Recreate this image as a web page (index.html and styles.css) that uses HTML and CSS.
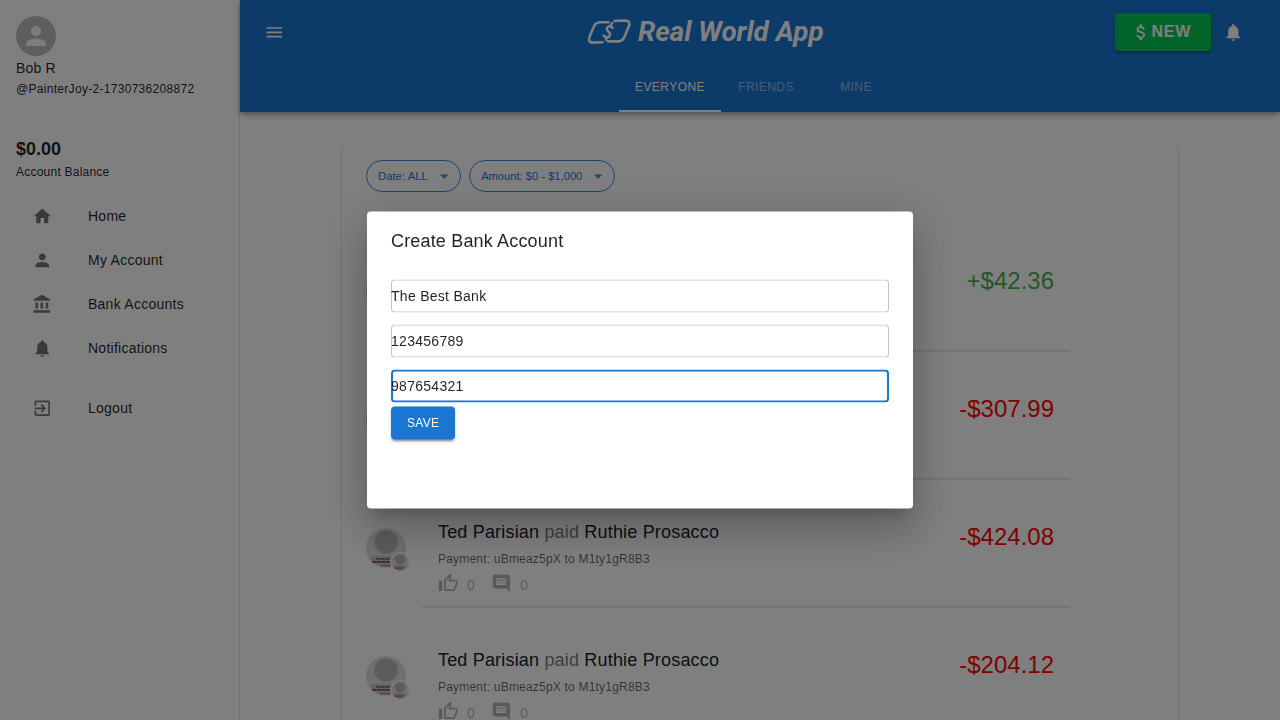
FILE: index.html
```html
<!DOCTYPE html>
<html lang="en">
<head>
<meta charset="utf-8">
<title>Real World App</title>
<link rel="stylesheet" href="styles.css">
</head>
<body>
<svg width="0" height="0" class="defs">
  <symbol id="person" viewBox="0 0 24 24"><path d="M12 12c2.21 0 4-1.79 4-4s-1.79-4-4-4-4 1.79-4 4 1.79 4 4 4zm0 2c-2.67 0-8 1.34-8 4v2h16v-2c0-2.66-5.33-4-8-4z"/></symbol>
  <symbol id="bell" viewBox="0 0 24 24"><path d="M12 22c1.1 0 2-.9 2-2h-4c0 1.1.89 2 2 2zm6-6v-5c0-3.07-1.64-5.64-4.5-6.32V4c0-.83-.67-1.5-1.5-1.5s-1.5.67-1.5 1.5v.68C7.63 5.36 6 7.92 6 11v5l-2 2v1h16v-1l-2-2z"/></symbol>
  <symbol id="drop" viewBox="0 0 24 24"><path d="M7 10l5 5 5-5z"/></symbol>
  <symbol id="thumb" viewBox="0 0 24 24"><path d="M9 21h9c.83 0 1.54-.5 1.84-1.22l3.02-7.05c.09-.23.14-.47.14-.73v-2c0-1.1-.9-2-2-2h-6.31l.95-4.57.03-.32c0-.41-.17-.79-.44-1.06L14.17 1 7.58 7.59C7.22 7.95 7 8.45 7 9v10c0 1.1.9 2 2 2zM9 9l4.34-4.34L12 10h9v2l-3 7H9V9zM1 9h4v12H1z"/></symbol>
  <symbol id="comment" viewBox="0 0 24 24"><path d="M21.99 4c0-1.1-.89-2-1.99-2H4c-1.1 0-2 .9-2 2v12c0 1.1.9 2 2 2h14l4 4-.01-18zM18 14H6v-2h12v2zm0-3H6V9h12v2zm0-3H6V6h12v2z"/></symbol>
  <symbol id="face" viewBox="0 0 40 40"><circle cx="20" cy="20" r="20" fill="#dedede"/><path d="M3.800 31 Q4.500 28 9 28H31Q35.500 28 36.200 31A20 20 0 0 1 3.800 31Z" fill="#c4c4c4"/><circle cx="20" cy="14" r="11.700" fill="#b9b9b9"/><path d="M10 30.800h18M6 34h22" stroke="#b8262b" stroke-width="1.300" stroke-dasharray="4.200 .5"/><path d="M14 37.500h12" stroke="#8a8a8a"/></symbol>
</svg>
<div class="app">
  <aside class="sidebar">
    <div class="avatar"><svg class="avatar-icon"><use href="#person"/></svg></div>
    <div class="name">Bob R</div>
    <div class="handle">@PainterJoy-2-1730736208872</div>
    <div class="balance">$0.00</div>
    <div class="balance-label">Account Balance</div>
    <nav class="nav">
      <a class="nav-item"><svg class="icon" viewBox="0 0 24 24"><path d="M10 20v-6h4v6h5v-8h3L12 3 2 12h3v8z"/></svg>Home</a>
      <a class="nav-item"><svg class="icon"><use href="#person"/></svg>My Account</a>
      <a class="nav-item"><svg class="icon" viewBox="0 0 24 24"><path d="M4 10v7h3v-7H4zm6 0v7h3v-7h-3zM2 22h19v-3H2v3zm14-12v7h3v-7h-3zm-4.500-9L2 6v2h19V6l-9.500-5z"/></svg>Bank Accounts</a>
      <a class="nav-item"><svg class="icon"><use href="#bell"/></svg>Notifications</a>
      <a class="nav-item logout"><svg class="icon" viewBox="0 0 24 24"><path d="M10.090 15.590L11.500 17l5-5-5-5-1.410 1.410L12.670 11H3v2h9.670l-2.580 2.590zM19 3H5c-1.110 0-2 .9-2 2v4h2V5h14v14H5v-4H3v4c0 1.100.89 2 2 2h14c1.100 0 2-.9 2-2V5c0-1.100-.9-2-2-2z"/></svg>Logout</a>
    </nav>
  </aside>
  <div class="main">
    <header class="appbar">
      <div class="toolbar">
        <svg class="icon" viewBox="0 0 24 24"><path d="M3 18h18v-2H3v2zm0-5h18v-2H3v2zm0-7v2h18V6H3z"/></svg>
        <div class="logo">
          <svg class="logo-mark" viewBox="0 0 44 26" fill="none" stroke="#fff" stroke-width="2.600" stroke-linecap="round" stroke-linejoin="round"><path d="M21.500 3.200H13.500Q9 3.200 7.200 7L2.600 17.500Q.8 23.600 5.500 23.600L15.500 23.200M27.500 2L38 1.500Q43.500 1.500 42 7L38 16.500Q36 22.400 31.500 22.400H21"/><path stroke-width="2.500" d="M25.500 8.800Q24.300 6.600 21.800 7.400Q18.600 9 20.500 11.600L22.600 13.800Q24 16.800 21.200 18Q18.200 19 16.600 16.500M23.500 6.500L25.300 4M19.600 18.800L19 20.800"/></svg>
          <span class="logo-text">Real World App</span>
        </div>
        <div class="actions">
          <div class="new"><svg class="new-icon" viewBox="0 0 24 24"><path d="M11.800 10.900c-2.270-.59-3-1.200-3-2.150 0-1.090 1.010-1.850 2.700-1.850 1.780 0 2.440.85 2.500 2.100h2.210c-.07-1.720-1.120-3.300-3.210-3.810V3h-3v2.160c-1.940.42-3.500 1.680-3.500 3.610 0 2.310 1.910 3.460 4.700 4.130 2.500.6 3 1.480 3 2.410 0 .69-.49 1.790-2.700 1.790-2.060 0-2.870-.92-2.980-2.100h-2.200c.12 2.190 1.760 3.420 3.680 3.830V21h3v-2.150c1.950-.37 3.500-1.500 3.500-3.550 0-2.840-2.430-3.810-4.700-4.400z"/></svg>NEW</div>
          <svg class="icon"><use href="#bell"/></svg>
        </div>
      </div>
      <div class="tabs"><div class="tab active">EVERYONE</div><div class="tab">FRIENDS</div><div class="tab">MINE</div></div>
    </header>
    <section class="paper">
      <div class="filters">
        <div class="chip">Date: ALL<svg class="icon"><use href="#drop"/></svg></div>
        <div class="chip amount-chip">Amount: $0 - $1,000<svg class="icon"><use href="#drop"/></svg></div>
      </div>
      <div class="list">
        <article class="row"><div class="faces"><svg class="face"><use href="#face"/></svg></div><div class="row-body"><div class="amount plus">+$42.36</div></div></article>
        <article class="row"><div class="faces"><svg class="face"><use href="#face"/></svg></div><div class="row-body"><div class="amount">-$307.99</div></div></article>
        <article class="row">
          <div class="faces"><svg class="face"><use href="#face"/></svg><svg class="badge"><use href="#face"/></svg></div>
          <div class="row-body">
            <div class="details"><div class="title">Ted Parisian <span>paid</span> Ruthie Prosacco</div><div class="note">Payment: uBmeaz5pX to M1ty1gR8B3</div><div class="stats"><svg class="icon"><use href="#thumb"/></svg><span>0</span><svg class="icon"><use href="#comment"/></svg><span>0</span></div></div>
            <div class="amount">-$424.08</div>
          </div>
        </article>
        <article class="row">
          <div class="faces"><svg class="face"><use href="#face"/></svg><svg class="badge"><use href="#face"/></svg></div>
          <div class="row-body">
            <div class="details"><div class="title">Ted Parisian <span>paid</span> Ruthie Prosacco</div><div class="note">Payment: uBmeaz5pX to M1ty1gR8B3</div><div class="stats"><svg class="icon"><use href="#thumb"/></svg><span>0</span><svg class="icon"><use href="#comment"/></svg><span>0</span></div></div>
            <div class="amount">-$204.12</div>
          </div>
        </article>
      </div>
    </section>
  </div>
</div>
<div class="backdrop">
  <div class="dialog" role="dialog">
    <h2 class="dialog-title">Create Bank Account</h2>
    <form class="form">
      <div class="field">The Best Bank</div>
      <div class="field">123456789</div>
      <div class="field focused">987654321</div>
      <div class="save">SAVE</div>
    </form>
  </div>
</div>
</body>
</html>
```
FILE: styles.css
```css
* { box-sizing: border-box; }
body { margin: 0; font-family: "Liberation Sans", Arial, sans-serif; font-size: 12px; color: rgba(0,0,0,.87); background: #fff; height: 720px; overflow: hidden; }
.defs { position: absolute; }
.icon { width: 20.57px; height: 20.57px; fill: currentColor; flex: none; }
.app { display: flex; height: 720px; overflow: hidden; }

.sidebar { width: 240px; flex: none; border-right: 1px solid rgba(0,0,0,.12); padding: 16px 0 0 16px; }
.avatar { width: 40px; height: 40px; border-radius: 50%; background: #bdbdbd; display: flex; align-items: center; justify-content: center; }
.avatar-icon { width: 30px; height: 30px; fill: #fafafa; }
.name { font-size: 14px; line-height: 24px; letter-spacing: .2px; }
.handle { line-height: 18px; letter-spacing: .3px; }
.balance { font-size: 18px; font-weight: 700; line-height: 28px; margin-top: 37px; }
.balance-label { line-height: 19px; letter-spacing: .23px; }
.nav { margin-top: 12.400px; }
.nav-item { display: flex; align-items: center; height: 44px; padding-left: 16.400px; gap: 35.030px; font-size: 14px; letter-spacing: .26px; }
.nav-item .icon { fill: rgba(0,0,0,.54); }
.logout { margin-top: 16px; }

.main { flex: 1; min-width: 0; background: #fff; }
.appbar { height: 112px; background: #1976d2; color: #fff; box-shadow: 0 2px 4px -1px rgba(0,0,0,.2), 0 4px 5px rgba(0,0,0,.14), 0 1px 10px rgba(0,0,0,.12); }
.toolbar { height: 64px; display: grid; grid-template-columns: 322.800px 1fr auto; align-items: center; padding: 0 36px 0 24px; }
.logo { display: flex; align-items: center; gap: 7.200px; margin-top: -1px; }
.logo-mark { width: 44px; height: 26px; }
.logo-text { font: italic 700 27.800px/36px Roboto, sans-serif; white-space: nowrap; }
.actions { display: flex; align-items: center; gap: 12px; }
.new { width: 96px; height: 38px; border-radius: 4px; background: #00c853; display: flex; align-items: center; justify-content: center; padding-right: 5px; font-size: 16px; font-weight: 700; letter-spacing: .7px; box-shadow: 0 3px 1px -2px rgba(0,0,0,.2), 0 2px 2px rgba(0,0,0,.14), 0 1px 5px rgba(0,0,0,.12); }
.new-icon { width: 20.57px; height: 20.57px; fill: #fff; }
.tabs { display: flex; justify-content: center; height: 48px; }
.tab { min-width: 90px; padding: 0 16px; line-height: 47px; text-align: center; letter-spacing: .45px; color: rgba(255,255,255,.5); }
.tab.active { color: #fff; border-bottom: 2px solid #fff; }

.paper { width: 836px; height: 700px; margin: 32px auto 0; padding: 16px 24px; border-radius: 4px; box-shadow: 0 2px 1px -1px rgba(0,0,0,.22), 0 1px 1px rgba(0,0,0,.14), 0 1px 3px rgba(0,0,0,.2); }
.filters { display: flex; gap: 8px; }
.chip { height: 32px; border: 1px solid rgba(25,118,210,.85); border-radius: 16px; color: #1976d2; font-size: 11.143px; letter-spacing: .1px; display: flex; align-items: center; padding: 0 6px 0 11px; gap: 5.800px; white-space: nowrap; }
.chip .icon { opacity: .8; }
.amount-chip { letter-spacing: .02px; padding-right: 5.600px; }
.list { margin-top: 32px; width: 704px; }
.row { display: flex; height: 128px; }
.faces { position: relative; width: 56px; padding-top: 48px; }
.face { width: 40px; height: 40px; display: block; }
.badge { position: absolute; left: 24px; top: 71.500px; width: 20px; height: 20px; border: 1px solid #fff; border-radius: 50%; background: #fff; }
.row-body { flex: 1; border-bottom: 2px solid rgba(0,0,0,.09); padding: 40px 16px 0; display: flex; }
.title { font-size: 18px; line-height: 24px; color: #1a202c; white-space: nowrap; letter-spacing: .18px; }
.title span { color: rgba(0,0,0,.54); }
.note { line-height: 18px; margin-top: 6px; color: rgba(0,0,0,.6); letter-spacing: .2px; }
.stats { display: flex; align-items: center; margin-top: 5.300px; color: rgba(0,0,0,.3); font-size: 14px; }
.stats span { margin: 2px 16px 0 8.500px; letter-spacing: .3px; }
.amount { margin-left: auto; font-size: 24px; line-height: 34px; color: #f00; }
.amount.plus { color: #4caf50; }

.backdrop { position: fixed; inset: 0; background: rgba(0,0,0,.5); display: flex; align-items: center; justify-content: center; }
.dialog { width: 546px; height: 297px; background: #fff; border-radius: 4px; padding: 16px 24px; transform: translateY(-.5px); box-shadow: 0 11px 15px -7px rgba(0,0,0,.2), 0 24px 38px 3px rgba(0,0,0,.14), 0 9px 46px 8px rgba(0,0,0,.12); }
.dialog-title { margin: 0; font-size: 18px; font-weight: 400; line-height: 27.430px; letter-spacing: .17px; }
.form { padding-top: 24.570px; display: flex; flex-direction: column; align-items: flex-start; }
.field { width: 100%; height: 33px; margin-bottom: 12px; box-shadow: inset 0 0 0 1px rgba(0,0,0,.23); border-radius: 4px; font-size: 14px; line-height: 32px; letter-spacing: .28px; }
.field.focused { box-shadow: inset 0 0 0 2px #1976d2; margin-bottom: 4px; }
.save { width: 64.400px; height: 33px; border-radius: 4px; background: #1976d2; color: #fff; text-align: center; line-height: 32px; letter-spacing: .02857em; box-shadow: 0 3px 1px -2px rgba(0,0,0,.2), 0 2px 2px rgba(0,0,0,.14), 0 1px 5px rgba(0,0,0,.12); }
```
